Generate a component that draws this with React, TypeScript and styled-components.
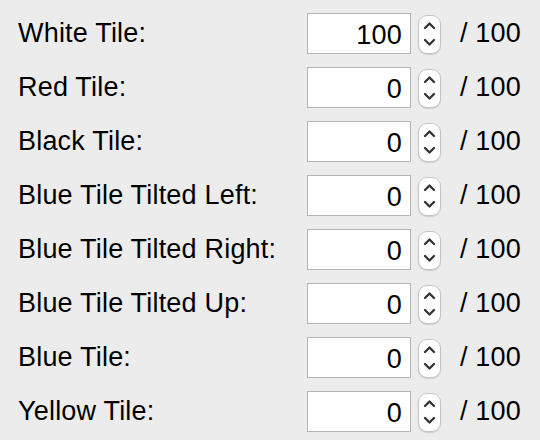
import styled, { createGlobalStyle } from 'styled-components';

const tiles = [
  { label: 'White Tile:', value: 100 },
  { label: 'Red Tile:', value: 0 },
  { label: 'Black Tile:', value: 0 },
  { label: 'Blue Tile Tilted Left:', value: 0 },
  { label: 'Blue Tile Tilted Right:', value: 0 },
  { label: 'Blue Tile Tilted Up:', value: 0 },
  { label: 'Blue Tile:', value: 0 },
  { label: 'Yellow Tile:', value: 0 }
];

export default function App() {
  return (
    <>
      <GlobalStyle />
      <Panel>
        {tiles.map((tile) => (
          <Row key={tile.label}>
            <Label>{tile.label}</Label>
            <Field readOnly defaultValue={String(tile.value)} />
            <Stepper>
              <svg width="13" height="30" viewBox="0 0 13 30" fill="none">
                <path d="M2 9 L6.5 4.5 L11 9" stroke="#333" strokeWidth="2.3" strokeLinecap="round" strokeLinejoin="round" />
                <path d="M2 21 L6.5 25.5 L11 21" stroke="#333" strokeWidth="2.3" strokeLinecap="round" strokeLinejoin="round" />
              </svg>
            </Stepper>
            <Suffix>/ 100</Suffix>
          </Row>
        ))}
      </Panel>
    </>
  );
}

const GlobalStyle = createGlobalStyle`
  html, body {
    margin: 0;
    padding: 0;
    background: #ececec;
  }
  body {
    font-family: "Liberation Sans", Arial, sans-serif;
    color: #000;
  }
`;

const Panel = styled.main`
  width: 540px;
  height: 440px;
  box-sizing: border-box;
  padding: 13px 19px 0 18px;
  display: flex;
  flex-direction: column;
  gap: 13px;
  background: #ececec;
`;

const Row = styled.div`
  display: flex;
  align-items: center;
  height: 41px;
`;

const Label = styled.span`
  flex: 1;
  font-size: 27px;
  letter-spacing: 0.2px;
  line-height: 1;
  white-space: nowrap;
`;

const Field = styled.input`
  width: 104px;
  height: 41px;
  flex: none;
  box-sizing: border-box;
  border: 1px solid #b4b4b4;
  background: #fff;
  padding: 4px 8px 0 0;
  margin: 0;
  text-align: right;
  font-family: "Liberation Sans", Arial, sans-serif;
  font-size: 27px;
  letter-spacing: 0.2px;
  color: #000;
  outline: none;
  border-radius: 0;
`;

const Stepper = styled.div`
  width: 23px;
  height: 39px;
  flex: none;
  margin-left: 7px;
  margin-top: 1px;
  box-sizing: border-box;
  border: 1px solid #c4c4c4;
  border-radius: 9px;
  background: #fff;
  box-shadow: 0 1px 1px rgba(0, 0, 0, 0.12);
  display: flex;
  align-items: center;
  justify-content: center;
`;

const Suffix = styled.span`
  width: 62px;
  flex: none;
  margin-left: 18px;
  font-size: 27px;
  letter-spacing: 0.2px;
  line-height: 1;
  text-align: right;
  white-space: nowrap;
`;
